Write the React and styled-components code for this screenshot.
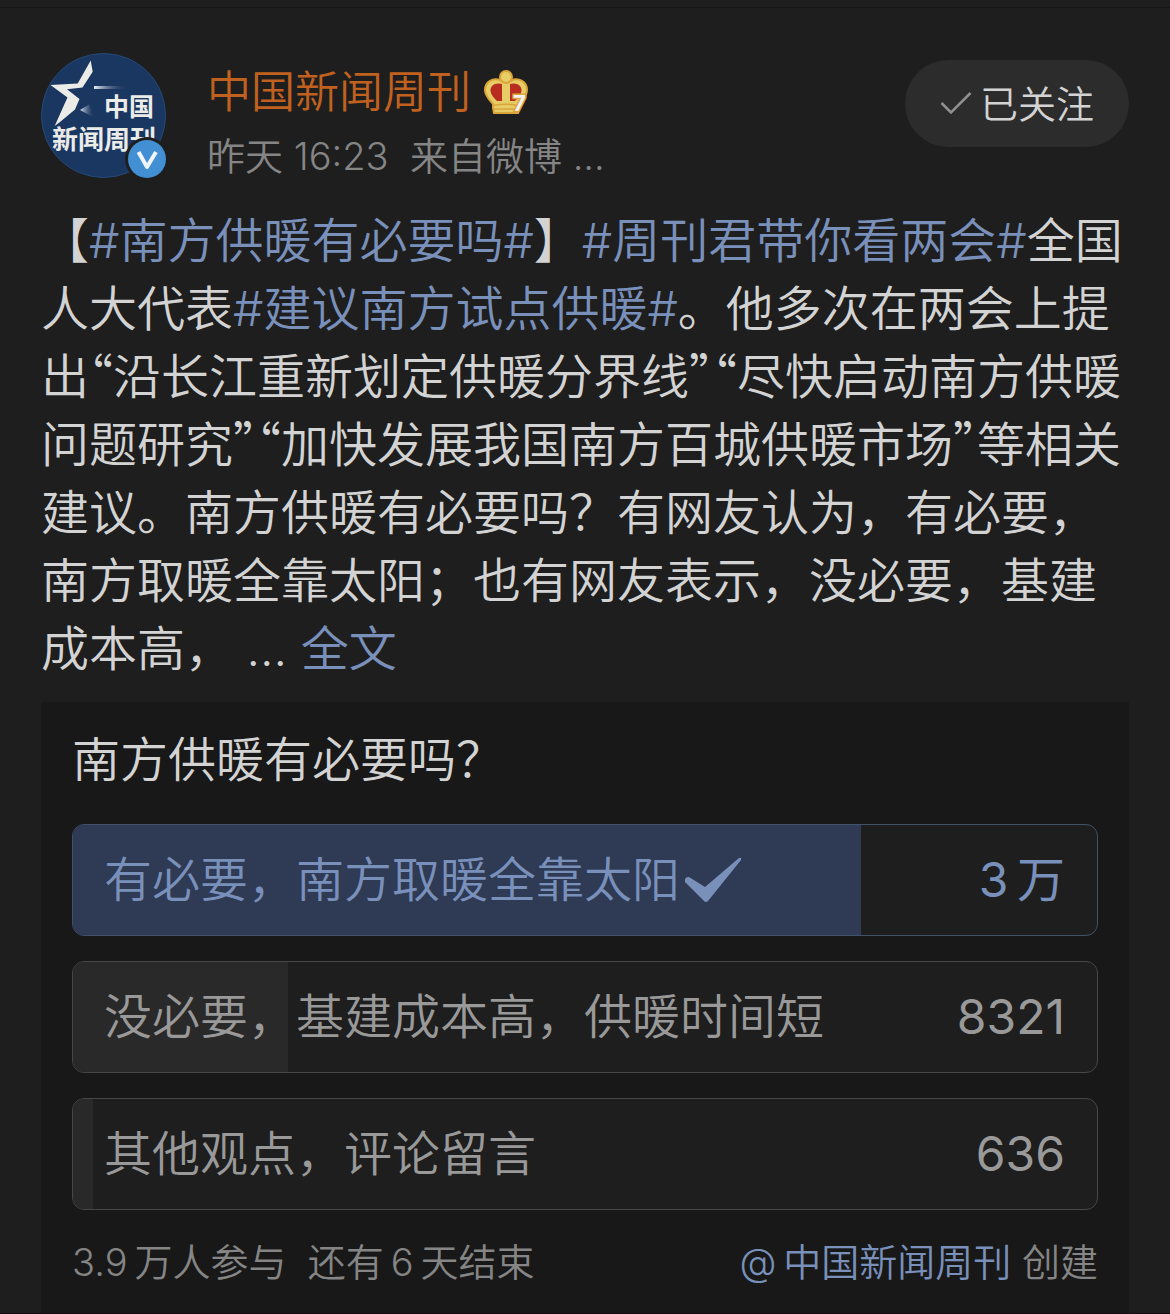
import React from "react";
import styled, { createGlobalStyle } from "styled-components";

const sans = `Inter, "Noto Sans CJK SC", sans-serif`;

const GlobalStyle = createGlobalStyle`
  * { box-sizing: border-box; }
  body {
    margin: 0;
    background: #1e1e1e;
    color: #d3d3d3;
    font-family: ${sans};
    font-weight: 350;
  }
  p, h1, h2 { margin: 0; font-weight: inherit; }
  button { font: inherit; color: inherit; border: 0; cursor: pointer; }
  a { text-decoration: none; }
`;

const Post = styled.article`
  margin-top: 7px;
  padding: 45px 41px 0;
  border-top: 1px solid #141414;
  border-bottom: 1px solid #120d10;
`;

const Header = styled.header`
  display: flex;
  align-items: flex-start;
  gap: 41px;
`;

const Avatar = styled.a`
  display: block;
  flex: none;
  width: 125px;
  height: 125px;
`;

const AvatarArt = styled.svg`
  display: block;
  width: 100%;
  height: 100%;
`;

const Author = styled.div`
  flex: 1;
  min-width: 0;
  padding-top: 7px;
`;

const NameRow = styled.div`
  display: flex;
  align-items: center;
  gap: 13px;
`;

const Name = styled.a`
  color: #c0611f;
  font-size: 44px;
  line-height: 64px;
`;

const Crown = styled.svg`
  width: 44px;
  height: 44px;
  overflow: visible;
`;

const Meta = styled.p`
  color: #858585;
  font-size: 38px;
  line-height: 64px;
  white-space: pre;
`;

const Follow = styled.button`
  display: flex;
  align-items: center;
  justify-content: center;
  gap: 8px;
  width: 224px;
  height: 87px;
  margin-top: 7px;
  padding: 0 0 4px;
  border-radius: 44px;
  background: #2c2c2c;
  font-size: 38px;
`;

const FollowTick = styled.svg`
  width: 32px;
  height: 24px;
`;

const Body = styled.p`
  margin-top: 19px;
  font-size: 48px;
  line-height: 68px;
  white-space: nowrap;
`;

/* Chinese quotation marks set at half width */
const Quote = styled.span`
  font-family: "Noto Sans CJK SC", sans-serif;
  font-feature-settings: "halt";
  line-height: 1;
`;

const Tag = styled.a`
  color: #7990bb;
`;

const Poll = styled.section`
  margin-top: 19px;
  padding: 24px 31px 23px;
  background: #181818;
`;

const Question = styled.h2`
  font-size: 48px;
  line-height: 68px;
`;

const Options = styled.div`
  display: grid;
  gap: 25px;
  margin-top: 30px;
`;

const Option = styled.button`
  display: grid;
  width: 100%;
  height: 112px;
  padding: 0;
  overflow: hidden;
  border: 1px solid ${(p) => (p.$chosen ? "#405169" : "#474747")};
  border-radius: 12px;
  background: #1e1e1e;
  color: ${(p) => (p.$chosen ? "#7990bb" : "#999999")};
  font-size: 48px;
  text-align: left;
`;

const Share = styled.span`
  grid-area: 1 / 1;
  height: 110px;
  background: ${(p) => (p.$chosen ? "#2f3a54" : "#292929")};
`;

const OptionText = styled.span`
  grid-area: 1 / 1;
  display: flex;
  align-items: center;
  padding: 0 32px 0 31px;
  line-height: 68px;
`;

const Votes = styled.span`
  margin-left: auto;
  font-weight: 400;
`;

const ChosenTick = styled.svg`
  width: 58px;
  height: 46px;
  margin-left: 4px;
`;

const Footer = styled.footer`
  display: flex;
  justify-content: space-between;
  margin-top: 24px;
  color: #858585;
  font-size: 38px;
  line-height: 56px;
`;

const Stats = styled.p`
  white-space: pre;
`;

const THIN = "\u2009";

const OPTIONS = [
  { label: "有必要，南方取暖全靠太阳", votes: `3${THIN}万`, share: 77, chosen: true },
  { label: "没必要，基建成本高，供暖时间短", votes: "8321", share: 21 },
  { label: "其他观点，评论留言", votes: "636", share: 2 },
];

function AvatarImage() {
  return (
    <AvatarArt viewBox="0 0 125 125" aria-hidden="true">
      <defs>
        <linearGradient id="beam" x1="0" x2="1">
          <stop offset="0" stopColor="#e8eef5" />
          <stop offset="1" stopColor="#1b3763" stopOpacity="0" />
        </linearGradient>
      </defs>
      <circle cx="62.5" cy="62.5" r="62" fill="#1a3762" stroke="#254a7a" />
      <path
        d="M49.700 7.500L36.700 30.500L9.500 32L26.500 44.500L23.500 51L13.700 73L19 69L34 56.500L38.500 46L26 36.200L41.500 34.500L51.700 18.700Z"
        fill="#ebebe8"
      />
      <rect x="53" y="33" width="34" height="3" fill="url(#beam)" />
      <path d="M39 57L48 51.500L54 65Z" fill="url(#beam)" />
      <g fill="#ebebe8" fontFamily='"Noto Sans CJK SC", sans-serif' fontWeight="700">
        <text x="63" y="63" fontSize="25">中国</text>
        <text x="11" y="96" fontSize="26">新闻周刊</text>
      </g>
      <circle cx="106" cy="106" r="22" fill="#1e1e1e" />
      <circle cx="106" cy="106" r="19" fill="#438fd3" />
      <path d="M97.500 99L106 114L115 99" fill="none" stroke="#f0f5fa" strokeWidth="4" strokeLinejoin="round" />
    </AvatarArt>
  );
}

function CrownIcon() {
  return (
    <Crown viewBox="0 0 44 44" role="img" aria-label="会员 7 级">
      <path
        d="M17 10.500C9 7 1 12 1 20C1 26 6 30 9 34V38L10 43H34L35 38V34C38 30 43 26 43 20C43 12 35 7 27 10.500Z"
        fill="#e6cd66"
        stroke="#dca53a"
        strokeWidth="2"
      />
      <circle cx="22" cy="7" r="6" fill="#e6cd66" stroke="#dca53a" strokeWidth="2" />
      <path d="M18 14C11 12 6 16 6.500 21C7 25 10 28 13 31H18Z" fill="#b92c20" />
      <path d="M26 14C33 12 38 16 37.500 21C37 25 34 28 31 31H26Z" fill="#b92c20" />
      <path d="M9 35.500Q22 33 35 35.500M10 39H34" fill="none" stroke="#dca53a" strokeWidth="1.500" />
      <text
        x="29"
        y="41"
        fontSize="22"
        fontWeight="700"
        fontFamily="Inter, sans-serif"
        fill="#f2f2f2"
        stroke="#dca53a"
        strokeWidth="3"
        paintOrder="stroke"
      >
        7
      </text>
    </Crown>
  );
}

export default function App() {
  return (
    <>
      <GlobalStyle />
      <Post>
        <Header>
          <Avatar href="#" aria-label="中国新闻周刊">
            <AvatarImage />
          </Avatar>
          <Author>
            <NameRow>
              <Name href="#">中国新闻周刊</Name>
              <CrownIcon />
            </NameRow>
            <Meta>昨天 16:23{"  "}来自微博 ...</Meta>
          </Author>
          <Follow type="button">
            <FollowTick viewBox="0 0 32 24" aria-hidden="true">
              <path d="M1.500 13L11 22.500L30.500 3" fill="none" stroke="#8f8f8f" strokeWidth="2.500" />
            </FollowTick>
            已关注
          </Follow>
        </Header>
        <Body lang="zh-CN">
          【<Tag href="#">#南方供暖有必要吗#</Tag>】<Tag href="#">#周刊君带你看两会#</Tag>全国<br />
          人大代表<Tag href="#">#建议南方试点供暖#</Tag>。他多次在两会上提<br />
          出<Quote>“</Quote>沿长江重新划定供暖分界线<Quote>”“</Quote>尽快启动南方供暖<br />
          问题研究<Quote>”“</Quote>加快发展我国南方百城供暖市场<Quote>”</Quote>等相关<br />
          建议。南方供暖有必要吗？有网友认为，有必要，<br />
          南方取暖全靠太阳；也有网友表示，没必要，基建<br />
          成本高， ... <Tag href="#">全文</Tag>
        </Body>
        <Poll>
          <Question>南方供暖有必要吗？</Question>
          <Options>
            {OPTIONS.map((o) => (
              <Option key={o.label} type="button" aria-pressed={!!o.chosen} $chosen={o.chosen}>
                <Share $chosen={o.chosen} style={{ width: `${o.share}%` }} />
                <OptionText>
                  {o.label}
                  {o.chosen && (
                    <ChosenTick viewBox="0 0 58 46" aria-hidden="true">
                      <path d="M1 25Q0 20 5 20L21 30L55 1Q58 0 57 3L24 44Q22 46 20 44Z" fill="#7990bb" />
                    </ChosenTick>
                  )}
                  <Votes>{o.votes}</Votes>
                </OptionText>
              </Option>
            ))}
          </Options>
          <Footer>
            <Stats>
              3.9{THIN}万人参与{"  "}还有{THIN}6{THIN}天结束
            </Stats>
            <p>
              <Tag href="#">@{THIN}中国新闻周刊</Tag> 创建
            </p>
          </Footer>
        </Poll>
      </Post>
    </>
  );
}
